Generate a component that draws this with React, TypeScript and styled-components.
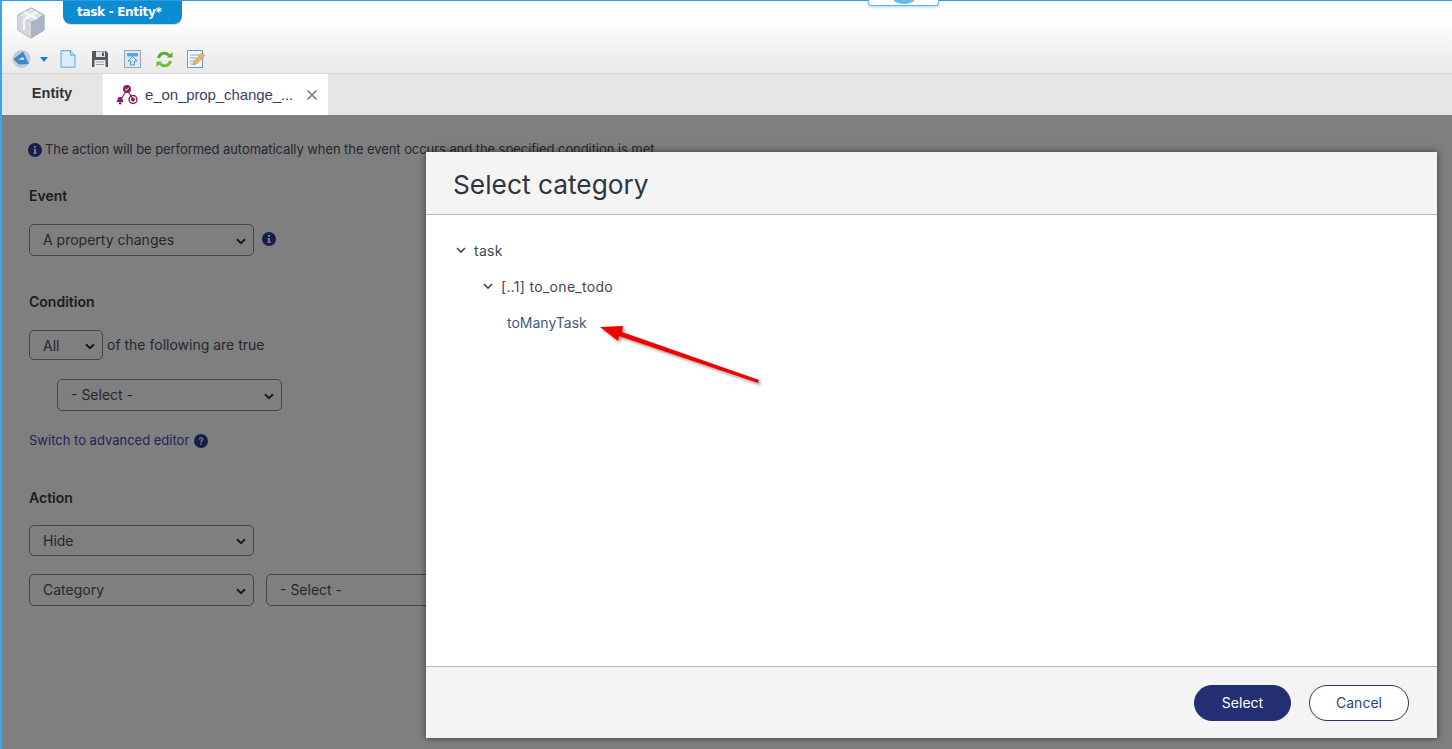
import React from "react";
import styled, { createGlobalStyle } from "styled-components";

const GlobalStyle = createGlobalStyle`
  html, body {
    margin: 0;
    padding: 0;
    height: 100%;
    overflow: hidden;
    background: #fff;
  }
  * {
    box-sizing: border-box;
  }
`;

const selectChevron =
  "url(\"data:image/svg+xml,%3Csvg xmlns='http://www.w3.org/2000/svg' width='10' height='7' viewBox='0 0 10 7'%3E%3Cpath d='M1 1.200l4 4 4-4' fill='none' stroke='%23333' stroke-width='2'/%3E%3C/svg%3E\")";

const Page = styled.div`
  display: flex;
  flex-direction: column;
  height: 749px;
  border-top: 1px solid #2a9be8;
  border-left: 2px solid #3aa5ee;
  font-family: Inter, "Liberation Sans", sans-serif;
  color: #4a4f5c;
`;

const Header = styled.header`
  position: relative;
  height: 72px;
  flex: none;
  display: flex;
  flex-direction: column;
  background: linear-gradient(#ffffff 0%, #fdfdfd 30%, #e9e9e9 100%);
`;

const TitleRow = styled.div`
  height: 47px;
  flex: none;
  display: flex;
  align-items: flex-start;
  padding-left: 14px;
`;

const CubeSlot = styled.div`
  width: 47px;
  padding-top: 6px;
  flex: none;
`;

const TitlePill = styled.div`
  width: 119px;
  height: 23px;
  padding-left: 14px;
  border-radius: 0 0 8px 8px;
  background: #0f8bd4;
  color: #fff;
  font-family: "DejaVu Sans", sans-serif;
  font-size: 12px;
  font-weight: 700;
  letter-spacing: -0.3px;
  line-height: 23px;
  box-shadow: 0 1px 1px rgba(0, 0, 0, 0.15);
`;

const PullTab = styled.div`
  position: absolute;
  top: -1px;
  left: 866px;
  width: 71px;
  height: 6px;
  background: #fff;
  border: 1px solid #62b4ee;
  border-top: none;
  border-radius: 0 0 4px 4px;
  box-shadow: 0 1px 3px rgba(70, 170, 250, 0.5);
  overflow: hidden;
  &::after {
    content: "";
    position: absolute;
    left: 24px;
    top: -8px;
    width: 22px;
    height: 12px;
    border-radius: 50%;
    background: #66b8f5;
  }
`;

const Toolbar = styled.div`
  display: flex;
  align-items: center;
  height: 22px;
  padding-left: 10px;
`;

const ToolIcon = styled.span<{ $gap: number }>`
  display: inline-flex;
  margin-right: ${(p) => p.$gap}px;
`;

const TabBar = styled.nav`
  height: 42px;
  flex: none;
  display: flex;
  background: #e5e5e5;
  border-top: 1px solid #d8d8d8;
`;

const PlainTab = styled.div`
  width: 101px;
  display: flex;
  align-items: center;
  justify-content: center;
  padding-bottom: 3px;
  border-right: 1px solid #efefef;
  font-family: "Liberation Sans", sans-serif;
  font-size: 14.5px;
  font-weight: 700;
  color: #333;
`;

const ActiveTab = styled.div`
  width: 225px;
  display: flex;
  align-items: center;
  padding-left: 13px;
  background: #fff;
  font-family: "Liberation Sans", sans-serif;
  font-size: 15px;
  letter-spacing: -0.1px;
  color: #3a3f6a;
`;

const TabLabel = styled.span`
  margin-left: 7px;
  width: 161px;
  white-space: nowrap;
`;

const TabClose = styled.span`
  display: inline-flex;
  color: #777;
`;

const Content = styled.main`
  position: relative;
  flex: 1;
  min-height: 0;
  background: #fff;
`;

const Form = styled.div`
  display: flex;
  flex-direction: column;
  align-items: flex-start;
  padding: 26px 0 0 27px;
  font-size: 14px;
  line-height: 17px;
`;

const Notice = styled.div`
  display: flex;
  align-items: center;
  gap: 3px;
  margin: 0 0 29px -1px;
  font-size: 13px;
  letter-spacing: -0.07px;
  white-space: nowrap;
`;

const SectionLabel = styled.div<{ $bottom: number }>`
  font-weight: 600;
  color: #3a3a3a;
  margin-bottom: ${(p) => p.$bottom}px;
`;

const Row = styled.div<{ $indent?: number; $bottom: number }>`
  display: flex;
  align-items: center;
  margin-left: ${(p) => p.$indent ?? 0}px;
  margin-bottom: ${(p) => p.$bottom}px;
  white-space: nowrap;
`;

const Select = styled.select<{ $w: number; $h?: number }>`
  appearance: none;
  width: ${(p) => p.$w}px;
  height: ${(p) => p.$h ?? 32}px;
  padding: 0 0 ${(p) => (p.$h ? 0 : 2)}px 13px;
  border: 1px solid #8a8a8a;
  border-radius: 5px;
  background: #fff ${selectChevron} no-repeat right 7px top 55%;
  color: #4a4f5c;
  font-family: Inter, "Liberation Sans", sans-serif;
  font-size: 14px;
`;

const InlineText = styled.span`
  margin: 0 0 2px 4px;
`;

const HintIcon = styled.span<{ $left: number; $lift?: number }>`
  display: inline-flex;
  margin-left: ${(p) => p.$left}px;
  margin-bottom: ${(p) => p.$lift ?? 0}px;
`;

const SwitchLink = styled.a`
  color: #3c4aa8;
  font-size: 13px;
  text-decoration: none;
`;

const Overlay = styled.div`
  position: absolute;
  inset: 0;
  background: rgba(0, 0, 0, 0.5);
`;

const Modal = styled.div`
  position: absolute;
  left: 424px;
  top: 37px;
  width: 1011px;
  height: 586px;
  display: flex;
  flex-direction: column;
  background: #fff;
  box-shadow: 0 0 7px rgba(0, 0, 0, 0.55);
`;

const ModalHeader = styled.div`
  height: 63px;
  flex: none;
  display: flex;
  align-items: center;
  padding: 2px 0 0 27px;
  background: #f4f4f4;
  border-bottom: 1px solid #b5b5b5;
  font-size: 26.3px;
  color: #2f3540;
`;

const ModalBody = styled.div`
  flex: 1;
  padding: 17px 0 0 28px;
  font-size: 14px;
  color: #3f4553;
`;

const TreeRow = styled.div<{ $indent: number }>`
  display: flex;
  align-items: center;
  gap: 7px;
  height: 36px;
  padding-left: ${(p) => p.$indent}px;
  letter-spacing: 0.3px;
  white-space: pre;
`;

const TreeLeaf = styled(TreeRow)`
  color: #3f5a7a;
  letter-spacing: 0;
`;

const ModalFooter = styled.div`
  height: 72px;
  flex: none;
  display: flex;
  align-items: center;
  justify-content: flex-end;
  gap: 18px;
  padding-right: 28px;
  background: #f4f4f4;
  border-top: 1px solid #b5b5b5;
`;

const Button = styled.button<{ $primary?: boolean }>`
  height: 36px;
  width: ${(p) => (p.$primary ? 97 : 100)}px;
  border-radius: 18px;
  border: 1px solid #232f72;
  background: ${(p) => (p.$primary ? "#232f72" : "#fff")};
  color: ${(p) => (p.$primary ? "#fff" : "#2f3f7a")};
  font-family: Inter, "Liberation Sans", sans-serif;
  font-size: 14px;
`;

const ArrowMark = styled.svg`
  position: absolute;
  left: 165px;
  top: 160px;
  overflow: visible;
`;

const Chevron = () => (
  <svg width="12" height="12" viewBox="0 0 12 12" fill="none">
    <path d="M2 4l4 4 4-4" stroke="#3f4553" strokeWidth="1.6" />
  </svg>
);

const InfoDot = ({ mark = "i" }: { mark?: string }) => (
  <svg width="14" height="14" viewBox="0 0 14 14">
    <circle cx="7" cy="7" r="7" fill="#2d3c96" />
    {mark === "i" ? (
      <path d="M6 3h2v1.800H6zM5.600 6h2.400v3.600h.6V11H5.500V9.600h.7V7.300h-.6z" fill="#fff" />
    ) : (
      <path
        d="M4.800 5.500C4.800 4 5.900 3.200 7.100 3.200c1.300 0 2.200.8 2.200 2 0 1.700-1.800 1.700-1.800 3H6.200c0-2 1.600-2 1.600-3 0-.4-.3-.7-.8-.7s-.9.4-.9 1zM6.200 9.200h1.400v1.500H6.200z"
        fill="#fff"
      />
    )}
  </svg>
);

const CubeIcon = () => (
  <svg width="30" height="32" viewBox="0 0 30 32">
    <path d="M15 1l13 7v15l-13 8-13-8V8z" fill="#d6dae2" stroke="#8a92a0" />
    <path d="M15 1l13 7-13 7L2 8z" fill="#dfe2e8" stroke="#a8aeba" strokeWidth="0.6" />
    <path d="M15 15l13-7v15l-13 8z" fill="#aab4c4" />
    <path d="M2 8l13 7v16L2 23z" fill="#d3d8e0" />
    <path d="M8 5l13 7M21 5L9 12" stroke="#fff" strokeWidth="2.400" opacity="0.8" />
    <path d="M8 12v11" stroke="#fff" strokeWidth="2" opacity="0.8" />
  </svg>
);

const GlobeMenuIcon = () => (
  <svg width="19" height="20" viewBox="0 0 19 20">
    <circle cx="9.500" cy="10" r="9" fill="#bccbda" />
    <path d="M1.500 10L11 2.500l6 12.500-10 .5z" fill="#3f86c8" />
    <path d="M6 10.500l5-2.500 1.500 3z" fill="#d4e6f6" />
  </svg>
);

const Caret = () => (
  <svg width="8" height="5" viewBox="0 0 8 5">
    <path d="M0 0h8L4 5z" fill="#1b7fd0" />
  </svg>
);

const PageIcon = () => (
  <svg width="16" height="18" viewBox="0 0 16 18">
    <path d="M1 .7h9.500L15 5.200v12H1z" fill="#d9ecfb" stroke="#5aa7e4" />
    <path d="M10.500.7v4.500H15" fill="#cfe6f9" stroke="#5aa7e4" />
  </svg>
);

const SaveIcon = () => (
  <svg width="18" height="18" viewBox="0 0 18 18">
    <path d="M1 1h14l2 2v14H1z" fill="#55595d" />
    <rect x="5" y="1.500" width="9" height="5.500" fill="#dfe4e8" />
    <rect x="11" y="2.500" width="2" height="3.500" fill="#55595d" />
    <rect x="3.500" y="10" width="11" height="7" fill="#eef0f2" />
    <path d="M5 12h8M5 14.500h8" stroke="#9aa0a5" />
  </svg>
);

const UploadIcon = () => (
  <svg width="17" height="18" viewBox="0 0 17 18">
    <rect x="0.500" y="0.500" width="16" height="17" fill="#e0e9f1" stroke="#9aa7b3" />
    <rect x="3" y="3" width="11" height="3.500" rx="1" fill="#53a7e8" />
    <path d="M8.500 6.500L13 11h-2.500v4h-4v-4H4z" fill="#d8ebfa" stroke="#2f86cc" strokeWidth="0.8" />
  </svg>
);

const RefreshIcon = () => (
  <svg width="17" height="17" viewBox="0 0 17 17" fill="none">
    <path d="M2.500 7a6 6 0 0 1 10.500-2.600" stroke="#58ab2c" strokeWidth="3" />
    <path d="M11 6.500h5.500V1z" fill="#58ab2c" />
    <path d="M14.500 10A6 6 0 0 1 4 12.600" stroke="#6cc032" strokeWidth="3" />
    <path d="M6 10.500H.5V16z" fill="#6cc032" />
  </svg>
);

const NotesIcon = () => (
  <svg width="18" height="18" viewBox="0 0 18 18">
    <rect x="0.500" y="0.500" width="15" height="17" fill="#f3f7fb" stroke="#5b9fd8" />
    <path d="M3 5h10M3 8h7M3 11h5M3 14h4" stroke="#9aa4ad" />
    <path d="M6 15l1-3.500L15 3l3 2.500-8.500 8.500z" fill="#e8b45a" stroke="#a9783a" strokeWidth="0.5" />
  </svg>
);

const WorkflowIcon = () => (
  <svg width="22" height="22" viewBox="0 0 22 22">
    <path d="M11 6L5 15M11 6l6 9" stroke="#86215f" strokeWidth="1.200" fill="none" />
    <circle cx="11" cy="5" r="4" fill="#8a1f63" />
    <path d="M9.200 5l1.300 1.300 2.300-2.600" stroke="#fff" strokeWidth="1" fill="none" />
    <path d="M0 18c1.600-1 1.400-2.300 1.800-3.800.5-1.500 4.100-1.500 4.600 0 .4 1.500.2 2.800 1.800 3.800z" fill="#8a1f63" />
    <circle cx="4.100" cy="19.300" r="1.300" fill="#8a1f63" />
    <circle cx="17" cy="15.500" r="4" fill="none" stroke="#8a1f63" strokeWidth="1.400" />
    <circle cx="17" cy="15.500" r="2" fill="#8a1f63" />
  </svg>
);

const CloseGlyph = () => (
  <svg width="12" height="12" viewBox="0 0 12 12">
    <path d="M1.500 1.500l9 9M10.500 1.500l-9 9" stroke="#777" strokeWidth="1.500" />
  </svg>
);

function App() {
  return (
    <Page>
      <GlobalStyle />
      <Header>
        <PullTab />
        <TitleRow>
          <CubeSlot>
            <CubeIcon />
          </CubeSlot>
          <TitlePill>task - Entity*</TitlePill>
        </TitleRow>
        <Toolbar>
          <ToolIcon $gap={9}>
            <GlobeMenuIcon />
          </ToolIcon>
          <ToolIcon $gap={12}>
            <Caret />
          </ToolIcon>
          <ToolIcon $gap={15}>
            <PageIcon />
          </ToolIcon>
          <ToolIcon $gap={15}>
            <SaveIcon />
          </ToolIcon>
          <ToolIcon $gap={15}>
            <UploadIcon />
          </ToolIcon>
          <ToolIcon $gap={14}>
            <RefreshIcon />
          </ToolIcon>
          <ToolIcon $gap={0}>
            <NotesIcon />
          </ToolIcon>
        </Toolbar>
      </Header>
      <TabBar>
        <PlainTab>Entity</PlainTab>
        <ActiveTab>
          <WorkflowIcon />
          <TabLabel>e_on_prop_change_...</TabLabel>
          <TabClose>
            <CloseGlyph />
          </TabClose>
        </ActiveTab>
      </TabBar>
      <Content>
        <Form>
          <Notice>
            <InfoDot />
            The action will be performed automatically when the event occurs and the specified
            condition is met
          </Notice>
          <SectionLabel $bottom={20}>Event</SectionLabel>
          <Row $bottom={37}>
            <Select $w={225} defaultValue="a">
              <option value="a">A property changes</option>
            </Select>
            <HintIcon $left={8} $lift={3}>
              <InfoDot />
            </HintIcon>
          </Row>
          <SectionLabel $bottom={20}>Condition</SectionLabel>
          <Row $bottom={19}>
            <Select $w={74} $h={30} defaultValue="all">
              <option value="all">All</option>
            </Select>
            <InlineText>of the following are true</InlineText>
          </Row>
          <Row $indent={28} $bottom={21}>
            <Select $w={225} defaultValue="none">
              <option value="none">- Select -</option>
            </Select>
          </Row>
          <Row $bottom={40}>
            <SwitchLink>Switch to advanced editor</SwitchLink>
            <HintIcon $left={5}>
              <InfoDot mark="?" />
            </HintIcon>
          </Row>
          <SectionLabel $bottom={19}>Action</SectionLabel>
          <Row $bottom={18}>
            <Select $w={225} $h={31} defaultValue="hide">
              <option value="hide">Hide</option>
            </Select>
          </Row>
          <Row $bottom={0}>
            <Select $w={225} defaultValue="category">
              <option value="category">Category</option>
            </Select>
            <HintIcon $left={12}>
              <Select $w={225} defaultValue="none">
                <option value="none">- Select -</option>
              </Select>
            </HintIcon>
          </Row>
        </Form>
        <Overlay />
        <Modal>
          <ModalHeader>Select category</ModalHeader>
          <ModalBody>
            <TreeRow $indent={1}>
              <Chevron />
              task
            </TreeRow>
            <TreeRow $indent={28}>
              <Chevron />
              [..1] to_one_todo
            </TreeRow>
            <TreeLeaf $indent={53}>toManyTask</TreeLeaf>
          </ModalBody>
          <ModalFooter>
            <Button $primary>Select</Button>
            <Button>Cancel</Button>
          </ModalFooter>
          <ArrowMark width="170" height="75" viewBox="0 0 170 75">
            <defs>
              <filter id="arrowShadow" x="-10%" y="-20%" width="125%" height="150%">
                <feDropShadow dx="2" dy="2" stdDeviation="1.500" floodColor="#000" floodOpacity="0.4" />
              </filter>
            </defs>
            <path
              d="M9 15L32 14 31 20 168 68 167 71 28 24 27 29z"
              fill="#f00000"
              filter="url(#arrowShadow)"
            />
          </ArrowMark>
        </Modal>
      </Content>
    </Page>
  );
}

export default App;
